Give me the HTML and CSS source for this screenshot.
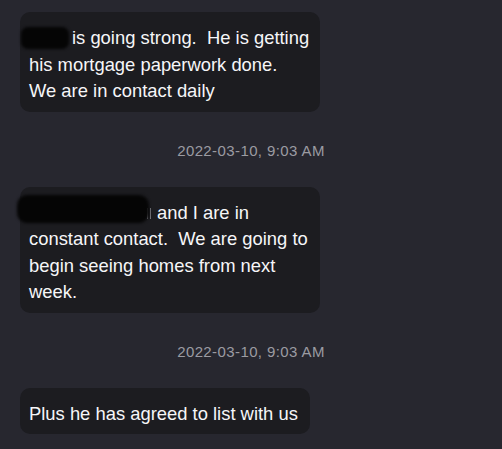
FILE: index.html
```html
<!DOCTYPE html>
<html>
<head>
  <title>Messages</title>
  <link rel="stylesheet" href="styles.css">
</head>
<body>
  <div class="thread">
    <div class="bubble wide">
      <span class="redact redact-short"></span>is going strong.&nbsp; He is getting<br>his mortgage paperwork done.<br>We are in contact daily
    </div>
    <div class="stamp">2022-03-10, 9:03 AM</div>
    <div class="bubble wide">
      <span class="redact redact-long"></span><span class="ghost"></span>and I are in<br>constant contact.&nbsp; We are going to<br>begin seeing homes from next<br>week.
    </div>
    <div class="stamp">2022-03-10, 9:03 AM</div>
    <div class="bubble">Plus he has agreed to list with us</div>
  </div>
</body>
</html>
```

FILE: styles.css
```css
body {
  background-color: #27272f;
  color: #f6f6f8;
  font-family: "Liberation Sans", Arial, sans-serif;
  margin: 0;
  padding: 12px 20px;
  overflow: hidden;
}

.thread {
  display: flex;
  flex-direction: column;
  align-items: flex-start;
}

.bubble {
  background-color: #1c1c20;
  border-radius: 10px;
  box-sizing: border-box;
  padding: 13px 12px 7px 9px;
  font-size: 18.4px;
  line-height: 26.5px;
  white-space: nowrap;
}

.bubble.wide {
  width: 300px;
}

.stamp {
  align-self: stretch;
  text-align: center;
  margin: 29px -20px 26px;
  font-size: 15px;
  line-height: 20px;
  color: #9b9ba2;
  letter-spacing: 0.4px;
}

.redact {
  display: inline-block;
  background-color: #050505;
  border-radius: 6px;
  filter: blur(1.5px);
  vertical-align: -4px;
  height: 20px;
}

.redact-short {
  width: 46px;
  margin: 0 4px 0 -7px;
  box-shadow: 0 0 0 1px #050505;
}

.redact-long {
  width: 124px;
  margin: 0 0 0 -8px;
  box-shadow: 0 -4px 0 4px #050505;
}

.ghost {
  display: inline-block;
  width: 2px;
  height: 11px;
  margin: 0 6px 0 2px;
  border-left: 1px solid #77777d;
  border-right: 1px solid #77777d;
  box-sizing: content-box;
}
```
